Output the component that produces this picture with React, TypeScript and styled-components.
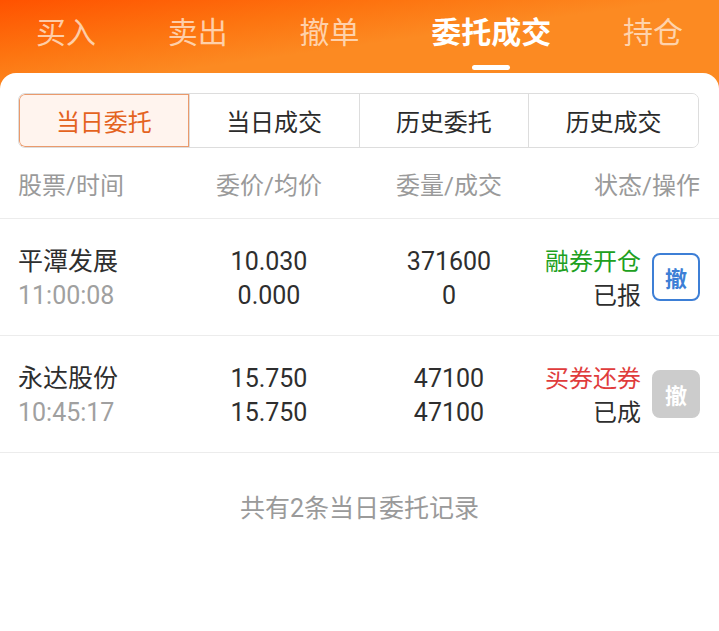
import React from 'react';
import styled, { createGlobalStyle } from 'styled-components';

const GlobalStyle = createGlobalStyle`
  body {
    margin: 0;
    background: #ffffff;
    font-family: Roboto, "Noto Sans CJK SC", "Noto Sans", sans-serif;
  }
`;

interface Order {
  name: string;
  time: string;
  price: string;
  avgPrice: string;
  qty: string;
  filled: string;
  kind: string;
  kindColor: 'green' | 'red';
  status: string;
  cancelable: boolean;
}

const orders: Order[] = [
  {
    name: '平潭发展',
    time: '11:00:08',
    price: '10.030',
    avgPrice: '0.000',
    qty: '371600',
    filled: '0',
    kind: '融券开仓',
    kindColor: 'green',
    status: '已报',
    cancelable: true,
  },
  {
    name: '永达股份',
    time: '10:45:17',
    price: '15.750',
    avgPrice: '15.750',
    qty: '47100',
    filled: '47100',
    kind: '买券还券',
    kindColor: 'red',
    status: '已成',
    cancelable: false,
  },
];

const topTabs = ['买入', '卖出', '撤单', '委托成交', '持仓'];
const subTabs = ['当日委托', '当日成交', '历史委托', '历史成交'];

const Page = styled.div`
  width: 719px;
  min-height: 631px;
  background: linear-gradient(172deg, #ff5200 0px, #fd7410 55px, #fc8a22 95px, #fc8a22 100%);
  display: flex;
  flex-direction: column;
`;

const TopBar = styled.nav`
  height: 73px;
  box-sizing: border-box;
  padding: 13px 36px 0;
  display: flex;
  justify-content: space-between;
  align-items: flex-start;
`;

const TopTab = styled.div<{ $active?: boolean }>`
  display: flex;
  flex-direction: column;
  align-items: center;
  font-size: 30px;
  line-height: 40px;
  font-weight: ${(p) => (p.$active ? 700 : 400)};
  color: ${(p) => (p.$active ? '#ffffff' : 'rgba(255, 232, 212, 0.78)')};
`;

const Indicator = styled.span<{ $show?: boolean }>`
  margin-top: 12px;
  width: 38px;
  height: 5px;
  border-radius: 3px;
  background: ${(p) => (p.$show ? '#ffffff' : 'transparent')};
`;

const Card = styled.main`
  flex: 1;
  background: #ffffff;
  border-radius: 16px 16px 0 0;
  padding-top: 20px;
`;

const Segments = styled.div`
  margin: 0 20px 0 18px;
  height: 55px;
  display: grid;
  grid-template-columns: repeat(4, 1fr);
  border: 1px solid #dddddd;
  border-radius: 7px;
  overflow: hidden;
  box-sizing: border-box;
`;

const Segment = styled.div<{ $active?: boolean }>`
  display: flex;
  align-items: center;
  justify-content: center;
  font-size: 24px;
  color: ${(p) => (p.$active ? '#e4631e' : '#2b2b2b')};
  background: ${(p) => (p.$active ? '#fff4ee' : '#ffffff')};
  border-left: 1px solid #dddddd;
  box-shadow: ${(p) => (p.$active ? 'inset 0 0 0 1px #ea9a6c' : 'none')};
  border-radius: ${(p) => (p.$active ? '6px 0 0 6px' : '0')};

  &:first-child {
    border-left: none;
  }
`;

const Grid = styled.div`
  display: grid;
  grid-template-columns: 161px 180px 180px 1fr;
  padding: 0 19px 0 18px;
  align-items: center;
  box-sizing: border-box;
`;

const HeadRow = styled(Grid)`
  height: 71px;
  border-bottom: 1px solid #ececec;
  font-size: 24px;
  color: #9a9a9a;
`;

const HeadCell = styled.div<{ $align: 'left' | 'center' | 'right' }>`
  text-align: ${(p) => p.$align};
`;

const Row = styled(Grid)`
  height: 117px;
  padding-top: 4px;
  border-bottom: 1px solid #ececec;
`;

const Cell = styled.div<{ $align: 'left' | 'center' }>`
  display: flex;
  flex-direction: column;
  align-items: ${(p) => (p.$align === 'left' ? 'flex-start' : 'center')};
  font-size: 25px;
  line-height: 34px;
  color: #2e2e2e;
`;

const SubText = styled.span<{ $muted?: boolean }>`
  color: ${(p) => (p.$muted ? '#a0a0a0' : '#2e2e2e')};
`;

const StatusCell = styled.div`
  display: flex;
  align-items: center;
  justify-content: flex-end;
  gap: 11px;
`;

const StatusText = styled.div`
  display: flex;
  flex-direction: column;
  align-items: flex-end;
  font-size: 24px;
  line-height: 34px;
  color: #2e2e2e;
`;

const Kind = styled.span<{ $tone: 'green' | 'red' }>`
  color: ${(p) => (p.$tone === 'green' ? '#20a020' : '#e03c3c')};
`;

const CancelButton = styled.button<{ $enabled: boolean }>`
  width: 48px;
  height: 48px;
  margin-top: -4px;
  box-sizing: border-box;
  padding: 0;
  border-radius: 8px;
  font-family: inherit;
  font-size: 22px;
  font-weight: 700;
  display: flex;
  align-items: center;
  justify-content: center;
  border: 2px solid ${(p) => (p.$enabled ? '#3d7fd6' : '#cccccc')};
  background: ${(p) => (p.$enabled ? '#ffffff' : '#cccccc')};
  color: ${(p) => (p.$enabled ? '#3d7fd6' : '#ffffff')};
`;

const Footer = styled.div`
  text-align: center;
  font-size: 25px;
  color: #9a9a9a;
  padding-top: 35px;
`;

export default function App() {
  return (
    <>
      <GlobalStyle />
      <Page>
        <TopBar>
          {topTabs.map((t) => (
            <TopTab key={t} $active={t === '委托成交'}>
              {t}
              <Indicator $show={t === '委托成交'} />
            </TopTab>
          ))}
        </TopBar>
        <Card>
          <Segments>
            {subTabs.map((t, i) => (
              <Segment key={t} $active={i === 0}>
                {t}
              </Segment>
            ))}
          </Segments>
          <HeadRow>
            <HeadCell $align="left">股票/时间</HeadCell>
            <HeadCell $align="center">委价/均价</HeadCell>
            <HeadCell $align="center">委量/成交</HeadCell>
            <HeadCell $align="right">状态/操作</HeadCell>
          </HeadRow>
          {orders.map((o) => (
            <Row key={o.name}>
              <Cell $align="left">
                <SubText>{o.name}</SubText>
                <SubText $muted>{o.time}</SubText>
              </Cell>
              <Cell $align="center">
                <SubText>{o.price}</SubText>
                <SubText>{o.avgPrice}</SubText>
              </Cell>
              <Cell $align="center">
                <SubText>{o.qty}</SubText>
                <SubText>{o.filled}</SubText>
              </Cell>
              <StatusCell>
                <StatusText>
                  <Kind $tone={o.kindColor}>{o.kind}</Kind>
                  <span>{o.status}</span>
                </StatusText>
                <CancelButton $enabled={o.cancelable}>撤</CancelButton>
              </StatusCell>
            </Row>
          ))}
          <Footer>共有2条当日委托记录</Footer>
        </Card>
      </Page>
    </>
  );
}
